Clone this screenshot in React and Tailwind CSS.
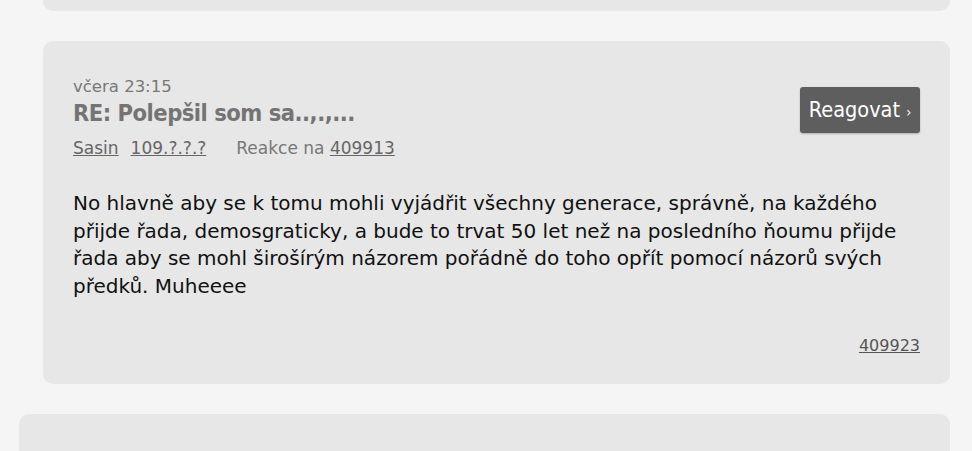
import React from 'react';

const comment = {
	date: "včera 23:15",
	title: "RE: Polepšil som sa..,.,...",
	author: "Sasin",
	ip: "109.?.?.?",
	parent: "409913",
	id: "409923",
	text: "No hlavně aby se k tomu mohli vyjádřit všechny generace, správně, na každého přijde řada, demosgraticky, a bude to trvat 50 let než na posledního ňoumu přijde řada aby se mohl širošírým názorem pořádně do toho opřít pomocí názorů svých předků. Muheeee"
};

const App = () => {
	return (
		<div className="min-h-screen bg-[#f5f5f5] overflow-hidden font-['DejaVu_Sans',sans-serif]">
			<div className="ml-[19px] mr-[22px] -mt-[30px] flex flex-col gap-[30px]">
				{/* previous comment (cut off) */}
				<div className="ml-[24px] h-[41px] rounded-[10px] bg-[#e7e7e7]" />

				{/* reply */}
				<div className="ml-[24px] h-[343px] rounded-[10px] bg-[#e7e7e7] px-[30px] pt-[35px] pb-[26px] flex flex-col">
					<div className="flex justify-between items-start">
						<div className="flex flex-col">
							<span className="text-[16.5px] leading-[22px] text-[#777]">{comment.date}</span>
							<h3 className="text-[23.5px] leading-[30px] font-bold text-[#747474] tracking-[-0.5px] font-['DejaVu_Sans_Condensed',sans-serif]">
								{comment.title}
							</h3>
							<div className="mt-[8px] text-[17px] leading-[24px] text-[#777] flex">
								<a href="#" className="underline text-[#666]">{comment.author}</a>
								<a href="#" className="ml-[12px] underline text-[#666]">{comment.ip}</a>
								<span className="ml-[30px]">
									Reakce na <a href="#" className="underline text-[#666]">{comment.parent}</a>
								</span>
							</div>
						</div>
						<button className="mt-[11px] w-[120px] h-[46px] rounded-[3px] bg-[#5e5e5e] text-white text-[21.5px] shadow-[0_1px_2px_rgba(0,0,0,0.25)] font-['DejaVu_Sans_Condensed',sans-serif]">
							Reagovat <span className="text-[14px]">›</span>
						</button>
					</div>

					<p className="mt-[30px] text-[20px] leading-[27.5px] text-[#111]">
						{comment.text}
					</p>

					<div className="mt-auto text-right">
						<a href="#" className="text-[16px] underline text-[#555]">{comment.id}</a>
					</div>
				</div>

				{/* next comment */}
				<div className="h-[60px] rounded-[10px] bg-[#e7e7e7]" />
			</div>
		</div>
	);
};

export default App;
